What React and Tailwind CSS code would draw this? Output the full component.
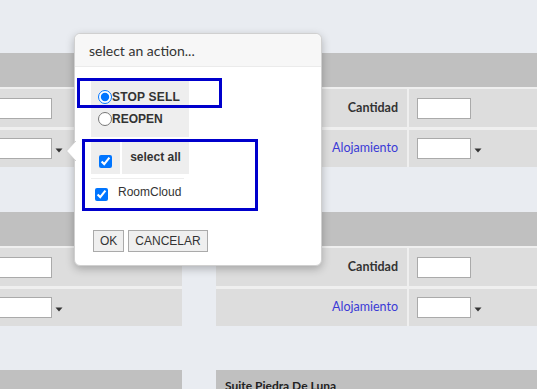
import React from "react";

const font = { fontFamily: "Lato, 'Liberation Sans', sans-serif" };

function Caret() {
  return (
    <svg width="8" height="5" viewBox="0 0 8 5" className="ml-[3px] mt-[3px]">
      <polygon points="0.5,0.5 7.5,0.5 4,4.5" fill="#333" />
    </svg>
  );
}

function Input() {
  return <div className="h-[21px] w-[54px] bg-white border border-[#aaaaaa]" />;
}

function LeftSection({ title }) {
  return (
    <div className={title ? "mt-[-1px]" : ""}>
      <div className="h-[34px] bg-[#c0c0c0]" />
      {!title && (
        <>
          <div className="h-[40px] border-t-2 border-[#efefef] bg-[#dddddd] flex items-center ml-[-2px]">
            <Input />
          </div>
          <div className="h-[40px] border-t-[3px] border-[#efefef] bg-[#dddddd] flex items-center ml-[-2px]">
            <Input />
            <Caret />
          </div>
        </>
      )}
    </div>
  );
}

function RightSection({ title }) {
  return (
    <div className={title ? "mt-[-1px]" : ""}>
      <div className="h-[34px] bg-[#c0c0c0] pl-[9px] pt-[8px] text-[12px] font-bold text-[#222] leading-[16px]">
        {title}
      </div>
      {!title && (
        <>
          <div className="h-[40px] border-t-2 border-[#efefef] flex">
            <div className="w-[191px] bg-[#dddddd] flex items-center justify-end pr-[9px] text-[12.5px] font-bold text-[#333]">
              Cantidad
            </div>
            <div className="w-[2px] bg-[#efefef]" />
            <div className="flex-1 bg-[#dddddd] flex items-center pl-[8px]">
              <Input />
            </div>
          </div>
          <div className="h-[40px] border-t-[3px] border-[#efefef] flex">
            <div className="w-[191px] bg-[#dddddd] flex items-center justify-end pr-[9px] text-[12.5px] text-[#3a3ad6]">
              Alojamiento
            </div>
            <div className="w-[2px] bg-[#efefef]" />
            <div className="flex-1 bg-[#dddddd] flex items-center pl-[8px]">
              <Input />
              <Caret />
            </div>
          </div>
        </>
      )}
    </div>
  );
}

export default function App() {
  return (
    <div className="relative h-[389px] w-full overflow-hidden bg-[#e9ecf1] pt-[53px]" style={font}>
      <div className="flex gap-[34px]">
        <div className="w-[182px] flex flex-col gap-[45px] shrink-0">
          <LeftSection />
          <LeftSection />
          <LeftSection title="x" />
        </div>
        <div className="flex-1 flex flex-col gap-[45px]">
          <RightSection />
          <RightSection />
          <RightSection title="Suite Piedra De Luna" />
        </div>
      </div>

      {/* popup */}
      <div className="absolute left-[74px] top-[33px] w-[248px] h-[233px] bg-white border border-[#d0d0d0] rounded-[6px] shadow-[0_3px_8px_rgba(0,0,0,0.25)]">
        <svg width="10" height="20" viewBox="0 0 10 20" className="absolute left-[-9px] top-[107px]">
          <polygon points="10,0 0.5,10 10,20" fill="white" />
          <polyline points="10,0 0.5,10 10,20" fill="none" stroke="#d0d0d0" strokeWidth="1" />
        </svg>
        <div className="h-[33px] bg-[#f7f7f7] border-b border-[#ebebeb] rounded-t-[6px] pl-[14px] flex items-center text-[14px] text-[#333]">
          select an action...
        </div>
        <div className="pl-[16px] pt-[12px]" style={{ fontFamily: "'Liberation Sans', Arial, sans-serif" }}>
          <div className="w-[98px] h-[58px] bg-[#eeeeee] pl-[7px] pt-[11px] flex flex-col gap-[8px] text-[12px] font-bold text-[#333]">
            <label className="flex items-center h-[14px]">
              <input type="radio" name="a" defaultChecked className="m-0 w-[14px] h-[14px]" />
              <span className="tracking-[0.2px]">STOP SELL</span>
            </label>
            <label className="flex items-center h-[14px]">
              <input type="radio" name="a" className="m-0 w-[14px] h-[14px]" />
              <span>REOPEN</span>
            </label>
          </div>
          <div className="mt-[5px] flex gap-[2px] h-[32px]">
            <div className="w-[29px] bg-[#eeeeee] flex items-center pl-[8px] pt-[6px]">
              <input type="checkbox" defaultChecked className="m-0 w-[13px] h-[13px]" />
            </div>
            <div className="w-[67px] bg-[#eeeeee] flex items-center justify-center pb-[2px] text-[12px] font-bold text-[#333]">
              select all
            </div>
          </div>
          <div className="mt-[4px] w-[93px] h-px bg-[#eeeeee]" />
          <div className="flex items-center h-[24px] mt-[1px] pl-[4px]">
            <input type="checkbox" defaultChecked className="m-0 w-[13px] h-[13px] mt-[5px]" />
            <span className="ml-[10px] text-[12px] text-[#333]">RoomCloud</span>
          </div>
          <div className="mt-[26px] ml-[2px] flex gap-[4px]">
            <button className="h-[22px] px-[6px] bg-[#efefef] border border-[#aaaaaa] text-[12px] text-[#333] leading-none">OK</button>
            <button className="h-[22px] px-[6px] bg-[#efefef] border border-[#aaaaaa] text-[12px] text-[#333] leading-none">CANCELAR</button>
          </div>
        </div>
      </div>

      {/* highlight boxes */}
      <div className="absolute left-[77px] top-[78px] w-[145px] h-[30px] border-[3px] border-[#0000cc] pointer-events-none" />
      <div className="absolute left-[82px] top-[139px] w-[176px] h-[72px] border-[3px] border-[#0000cc] pointer-events-none" />
    </div>
  );
}
